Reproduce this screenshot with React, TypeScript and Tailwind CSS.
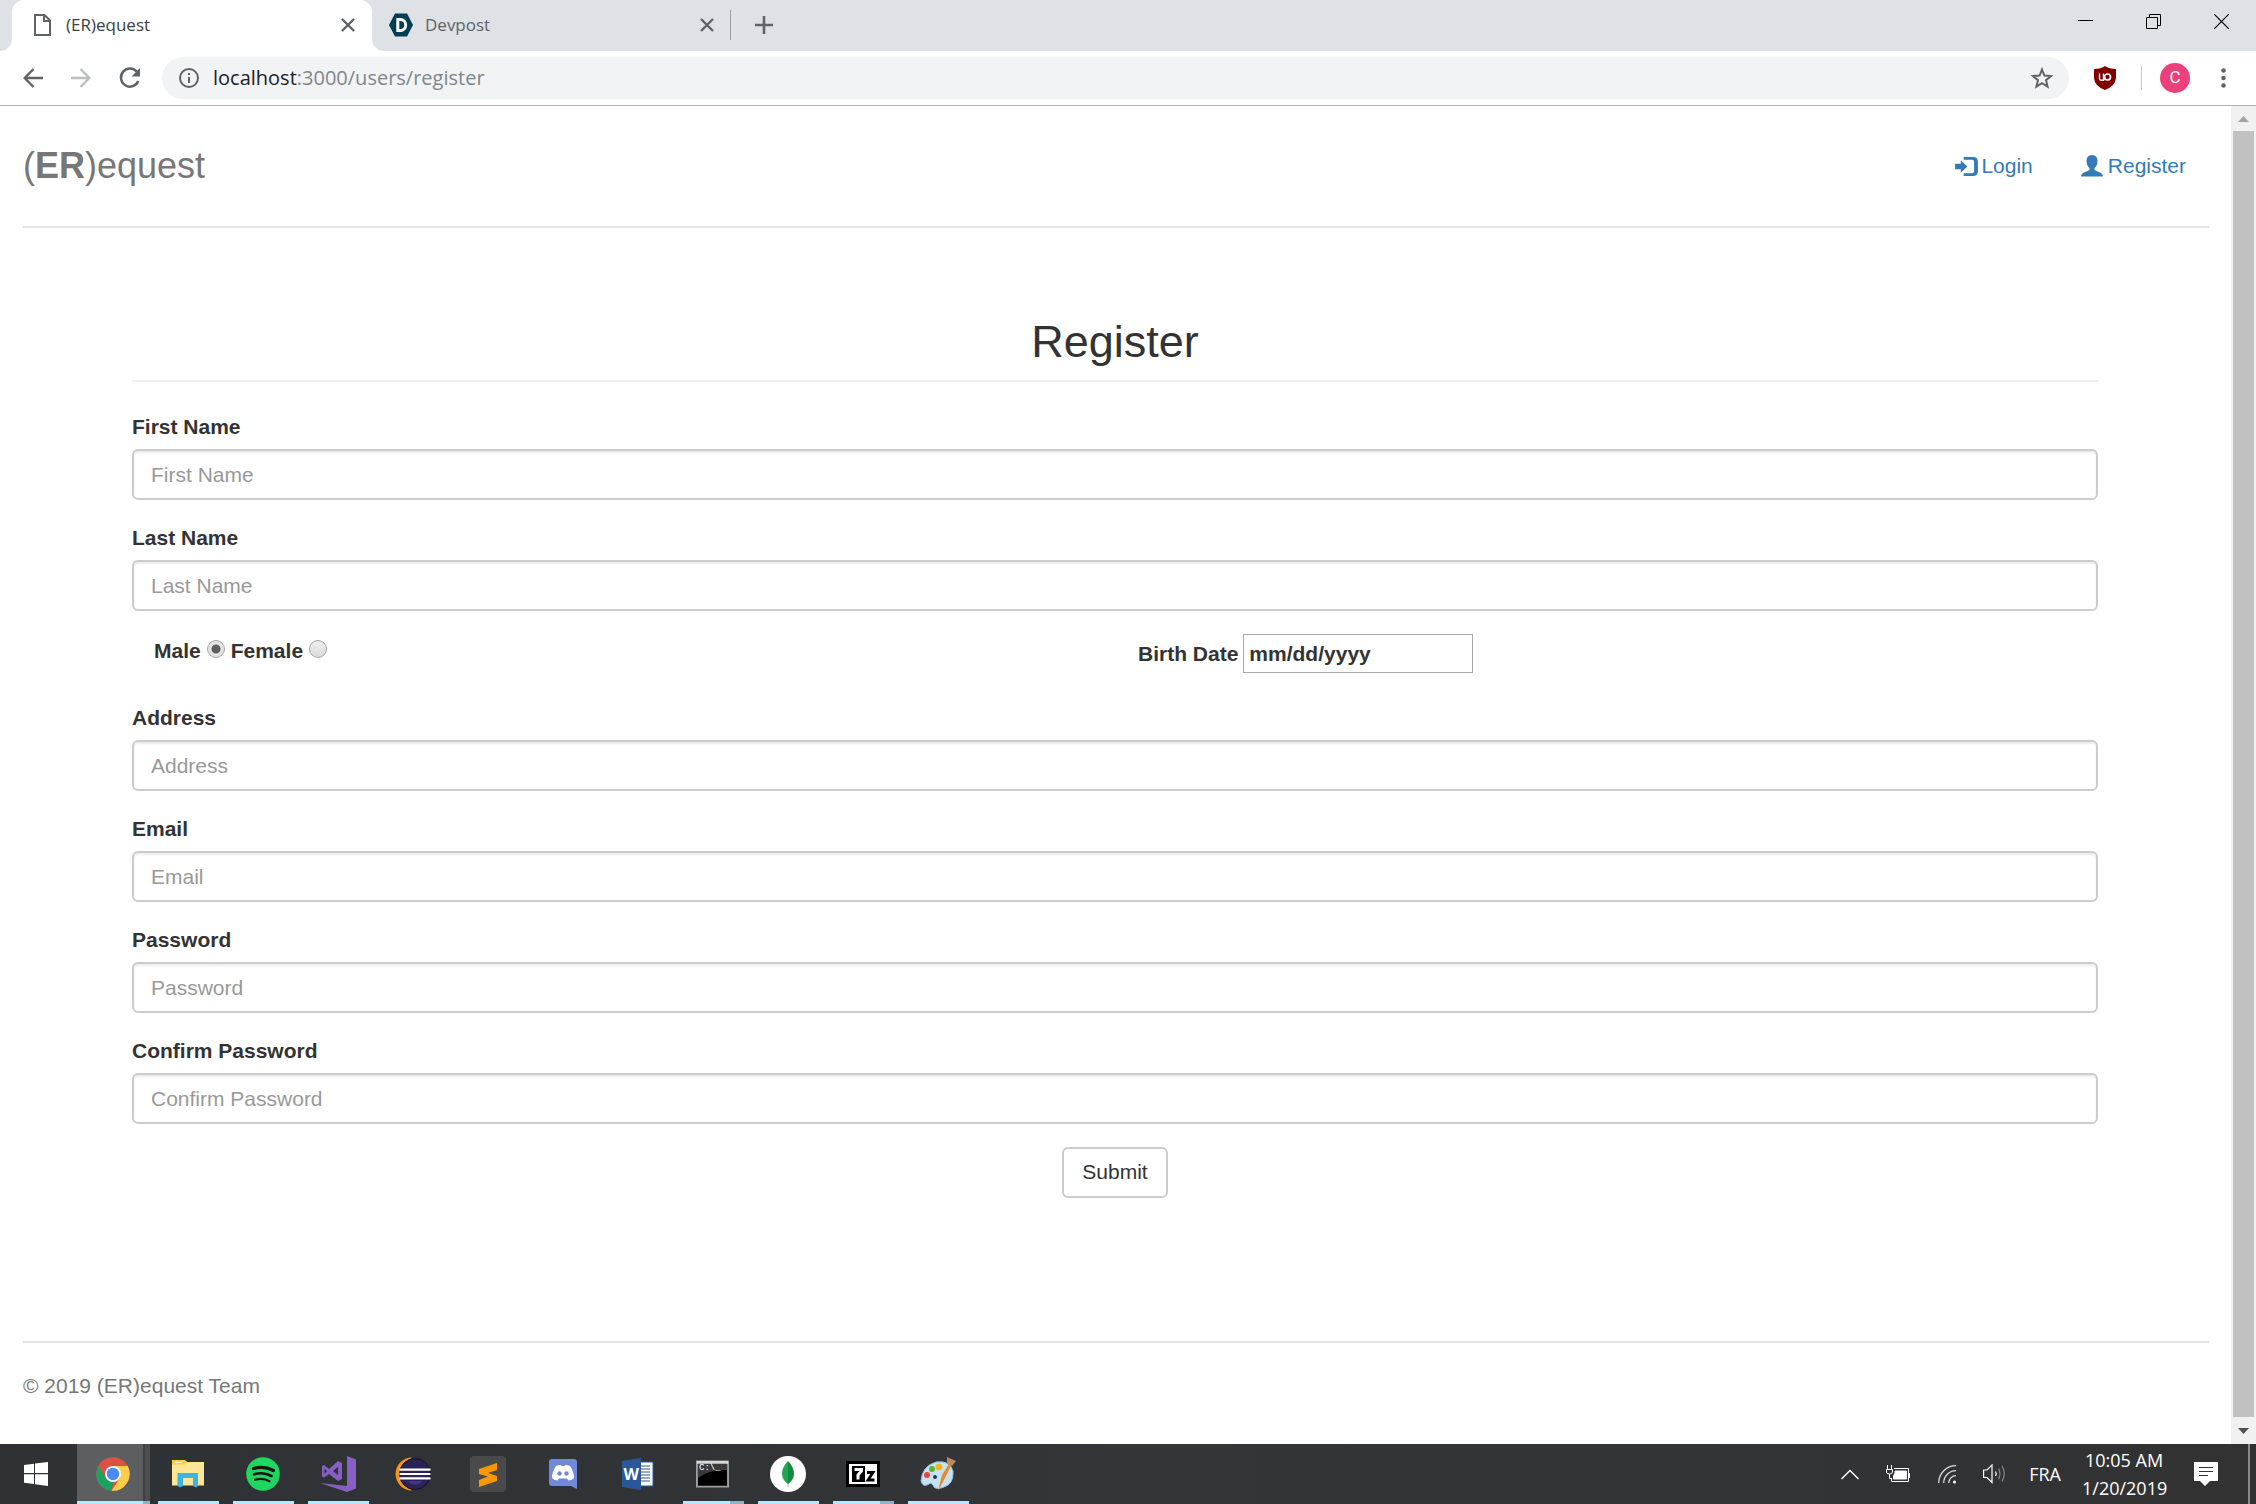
import React from "react";

const CloseTab = () => (
  <svg width="14" height="14" viewBox="0 0 14 14" stroke="#5f6368" strokeWidth="2.4" fill="none">
    <path d="M1 1 L13 13 M13 1 L1 13" />
  </svg>
);

function TabStrip() {
  return (
    <header className="flex h-[51px] items-stretch bg-[#dee1e6]">
      <div className="flex w-3 items-end">
        <svg width="12" height="12" viewBox="0 0 12 12"><path d="M12 0 V12 H0 A12 12 0 0 0 12 0Z" fill="#fff" /></svg>
      </div>
      <div className="flex w-[360px] items-center rounded-t-xl bg-white pb-0.5 pl-[22px] pr-[17px]">
        <svg width="17" height="22" viewBox="0 0 17 22" fill="none" stroke="#5f6368" strokeWidth="2">
          <path d="M1 1 H10.500 L16 6.500 V21 H1Z" /><path d="M10 1 V7 H16" />
        </svg>
        <span className="ml-[15px] flex-1 text-[17px] text-[#3c4043]">(ER)equest</span>
        <button aria-label="Close (ER)equest"><CloseTab /></button>
      </div>
      <div className="flex w-3 items-end">
        <svg width="12" height="12" viewBox="0 0 12 12"><path d="M0 0 V12 H12 A12 12 0 0 1 0 0Z" fill="#fff" /></svg>
      </div>
      <div className="flex w-[346px] items-center pb-0.5 pl-[5px] pr-4">
        <svg width="24" height="24" viewBox="0 0 24 24">
          <path d="M6 0.500 H18 L24 12 L18 23.500 H6 L0 12Z" fill="#003e54" />
          <path d="M8.800 6.500 H11.500 A5.200 5.500 0 0 1 11.500 17.500 H8.800Z" fill="none" stroke="#fff" strokeWidth="3" />
        </svg>
        <span className="ml-3 flex-1 text-[17px] text-[#5f6368]">Devpost</span>
        <button aria-label="Close Devpost"><CloseTab /></button>
      </div>
      <div className="flex items-center gap-6 pb-0.5">
        <span className="h-[30px] w-px bg-[#9a9da1]" />
        <button aria-label="New tab">
          <svg width="18" height="18" viewBox="0 0 18 18" stroke="#5f6368" strokeWidth="2.6"><path d="M9 0 V18 M0 9 H18" /></svg>
        </button>
      </div>
      <div className="ml-auto flex items-start gap-[53px] pr-[27px] pt-[14px]">
        <button aria-label="Minimize"><svg width="15" height="15" viewBox="0 0 15 15"><path d="M0 6.500 H15" stroke="#000" /></svg></button>
        <button aria-label="Restore"><svg width="15" height="15" viewBox="0 0 15 15" fill="none" stroke="#000"><path d="M.5 3.500 H11.500 V14.500 H.5Z M3.500 3.500 V.5 H14.500 V11.500 H11.500" /></svg></button>
        <button aria-label="Close"><svg width="15" height="15" viewBox="0 0 15 15" stroke="#000" strokeWidth="1.200"><path d="M0 0 L15 15 M15 0 L0 15" /></svg></button>
      </div>
    </header>
  );
}

function Toolbar() {
  return (
    <div className="flex h-[55px] items-center border-b border-[#b0b2b5] bg-white pl-[23px] pr-[30px]">
      <div className="flex w-[139px] items-center gap-7">
        <button aria-label="Back"><svg width="20" height="20" viewBox="0 0 20 20" fill="none" stroke="#5f6368" strokeWidth="2.400"><path d="M20 10 H2 M10.500 1 L1.700 10 L10.500 19" /></svg></button>
        <button aria-label="Forward"><svg width="20" height="20" viewBox="0 0 20 20" fill="none" stroke="#bbbdc0" strokeWidth="2.400"><path d="M0 10 H18 M9.500 1 L18.300 10 L9.500 19" /></svg></button>
        <button aria-label="Reload"><svg width="22" height="22" viewBox="0 0 22 22" fill="none" stroke="#5f6368" strokeWidth="2.500"><path d="M18 5 A9 9 0 1 0 19.300 14" /><path d="M21 1 V9.500 H12.500Z" fill="#5f6368" stroke="none" /></svg></button>
      </div>
      <div className="flex h-[42px] flex-1 items-center rounded-full bg-[#f1f3f4] pl-[17px] pr-[16px]">
        <svg width="20" height="20" viewBox="0 0 20 20" fill="none" stroke="#5f6368" strokeWidth="2"><circle cx="10" cy="10" r="9" /><path d="M10 9 V15 M10 5 V7" /></svg>
        <a href="#address" className="ml-[14px] flex-1 text-[20px] text-[#80868b]"><span className="text-[#202124]">localhost</span>:3000/users/register</a>
        <button aria-label="Bookmark"><svg width="22" height="22" viewBox="0 0 22 22" fill="none" stroke="#5f6368" strokeWidth="2"><path d="M11 2.500 L13.400 8.500 L20 9 L15 13.200 L16.600 19.600 L11 16.100 L5.400 19.600 L7 13.200 L2 9 L8.600 8.500Z" /></svg></button>
      </div>
      <div className="flex items-center pl-[25px]">
        <button aria-label="uBlock Origin">
          <svg width="22" height="24" viewBox="0 0 22 24"><path d="M11 0 Q15 3 22 3 V12 Q21.500 20 11 24 Q.5 20 0 12 V3 Q7 3 11 0Z" fill="#800000" /><path d="M5.500 7.500 V12.500 Q5.500 14.200 7.200 14.200 H9.500 V7.500" fill="none" stroke="#fff" strokeWidth="1.400" /><circle cx="13.500" cy="11" r="3" fill="none" stroke="#fff" strokeWidth="1.700" /></svg>
        </button>
        <span className="ml-[25px] h-6 w-px bg-[#c6c8ca]" />
        <button className="ml-[18px] flex size-[30px] items-center justify-center rounded-full bg-[#ec407a] font-[Roboto] text-[17px] text-white">C</button>
        <button aria-label="Menu" className="ml-[31px]"><svg width="5" height="22" viewBox="0 0 5 22" fill="#5f6368"><circle cx="2.500" cy="3.500" r="2.300" /><circle cx="2.500" cy="11" r="2.300" /><circle cx="2.500" cy="18.500" r="2.300" /></svg></button>
      </div>
    </div>
  );
}

function Field({ id, label, type = "text" }: { id: string; label: string; type?: string }) {
  return (
    <div className="mb-[23px]">
      <label htmlFor={id} className="mb-[7px] block font-bold">{label}</label>
      <input id={id} type={type} placeholder={label} className="block h-[51px] w-full rounded-md border-2 border-[#ccc] bg-white px-[17px] shadow-[inset_0_2px_2px_rgba(0,0,0,0.075)] placeholder:text-[#999]" />
    </div>
  );
}

const radioClass =
  "mx-1.5 mb-0.5 size-[18px] appearance-none rounded-full border border-[#a6a6a6] bg-linear-to-b from-[#eee] to-[#dcdcdc] checked:bg-[radial-gradient(circle,#5e5e5e_0_4px,#e3e3e3_5px)]";

function Page() {
  return (
    <main className="min-w-0 flex-1 bg-white pl-[23px] pr-[22px] font-['Liberation_Sans',Arial,sans-serif] text-[21px] leading-[30px] text-[#333]">
      <nav className="flex h-[122px] items-center justify-between border-b-2 border-[#e5e5e5] pr-[23px]">
        <h3 className="text-[36px] leading-10 text-[#777]">(<b>ER</b>)equest</h3>
        <div className="flex gap-[48px] text-[#337ab7]">
          <a href="#login" className="flex items-center gap-[3px]">
            <svg width="23" height="19" viewBox="0 0 24 20" fill="#337ab7"><path d="M0 7 H6 V3.500 L13 10 L6 16.500 V13 H0Z" /><path d="M9 0 H19 Q24 0 24 5 V15 Q24 20 19 20 H9 V17 H18 Q20 17 20 15 V5 Q20 3 18 3 H9Z" /></svg>
            Login
          </a>
          <a href="#register" className="flex items-center gap-[5px]">
            <svg width="22" height="22" viewBox="0 0 22 22" fill="#337ab7"><path d="M5.500 6 Q5.500 0 11 0 Q16.500 0 16.500 6 Q16.500 10.500 13.500 13 V15 L20 18 Q22 19 22 21.500 H0 Q0 19 2 18 L8.500 15 V13 Q5.500 10.500 5.500 6Z" /></svg>
            Register
          </a>
        </div>
      </nav>
      <form className="ml-[109px] mr-[111px] pt-[87px]" onSubmit={(e) => e.preventDefault()}>
        <h2 className="mb-[30px] border-b-2 border-[#eee] pb-3 text-center text-[45px] leading-[53px]">Register</h2>
        <Field id="first" label="First Name" />
        <Field id="last" label="Last Name" />
        <div className="grid h-[69px] grid-cols-2 font-bold">
          <div className="flex items-baseline pl-[22px] leading-[34px]">
            <label htmlFor="male">Male</label>
            <input id="male" type="radio" name="gender" defaultChecked className={radioClass} />
            <label htmlFor="female">Female</label>
            <input id="female" type="radio" name="gender" className={radioClass} />
          </div>
          <div className="flex h-[39px] items-center pl-[23px]">
            <label htmlFor="birth">Birth Date</label>
            <input id="birth" type="text" placeholder="mm/dd/yyyy" className="ml-[5px] h-[39px] w-[230px] border border-[#a9a9a9] px-[5px] font-bold placeholder:text-[#333]" />
          </div>
        </div>
        <Field id="address" label="Address" />
        <Field id="email" label="Email" type="email" />
        <Field id="password" label="Password" type="password" />
        <Field id="confirm" label="Confirm Password" type="password" />
        <div className="flex justify-center">
          <button type="submit" className="h-[51px] rounded-md border-2 border-[#ccc] bg-white px-[18px] pb-0.5">Submit</button>
        </div>
      </form>
      <footer className="mt-[143px] border-t-2 border-[#e5e5e5] pt-[28px] text-[#777]">© 2019 (ER)equest Team</footer>
    </main>
  );
}

function ScrollBar() {
  return (
    <div className="flex w-[25px] flex-col items-center bg-[#f1f1f1]">
      <svg width="25" height="25" viewBox="0 0 25 25"><path d="M7 16 L12.500 10 L18 16Z" fill="#a3a3a3" /></svg>
      <div className="w-[21px] flex-1 bg-[#c1c1c1]" />
      <svg width="25" height="27" viewBox="0 0 25 27"><path d="M7 11 L12.500 17 L18 11Z" fill="#505050" /></svg>
    </div>
  );
}

const Chrome = () => (
  <svg width="34" height="34" viewBox="0 0 34 34">
    <circle cx="17" cy="17" r="16.800" fill="#dd5144" />
    <path d="M2.400 8.600 L10 21.500 L17 25 L15.500 33.800 A17 17 0 0 1 2.400 8.600Z" fill="#1aa260" />
    <path d="M17 9 H31.700 A17 17 0 0 1 15.500 33.800 L24 21Z" fill="#ffcd46" />
    <circle cx="17" cy="17" r="8" fill="#fff" /><circle cx="17" cy="17" r="6.200" fill="#4a8af4" />
  </svg>
);
const Explorer = () => (
  <svg width="32" height="28" viewBox="0 0 32 28">
    <path d="M0 1 H13 L15 2 H32 V25.500 H0Z" fill="#ffe694" /><path d="M0 0 H13 L15 2 L13 4.500 H0Z" fill="#ffcf38" /><path d="M3 2.500 H10" stroke="#fff" />
    <path d="M5.500 13 H26 V26 L24 27.500 L21 26 V18 H11 V26 L8 27.500 L5.500 26Z" fill="#3cb4e7" />
  </svg>
);
const Spotify = () => (
  <svg width="34" height="34" viewBox="0 0 34 34" fill="none" stroke="#191414" strokeLinecap="round">
    <circle cx="17" cy="17" r="16.800" fill="#1ed760" stroke="none" />
    <path d="M7.500 11.500 Q18 8.500 27.500 13.500" strokeWidth="3.200" /><path d="M8 17.300 Q17.500 14.500 25.500 19" strokeWidth="2.600" /><path d="M9 22.800 Q17 20.500 23.500 24.300" strokeWidth="2.200" />
  </svg>
);
const VisualStudio = () => (
  <svg width="36" height="36" viewBox="0 0 36 36" fill="#865fc5">
    <path d="M27 0 L36 3.500 V32.500 L27 36 L0 27 L27 30Z" />
    <path fillRule="evenodd" d="M18 5 L22 7 V23 L18 25 L9 18 L4 21.500 L2 20.500 V10 L4 9 L9 13 Z M18 11 L13 15 L18 19Z M4.500 12.500 V18 L7 15.300Z" />
  </svg>
);
const Eclipse = () => (
  <svg width="36" height="34" viewBox="0 0 36 34">
    <path d="M17 .5 A16.500 16.500 0 0 0 17 33.500 A20 20 0 0 1 17 .5Z" fill="#f7941e" />
    <circle cx="20" cy="17" r="15.500" fill="#2c2255" stroke="#14102b" />
    <path d="M12 24 H28 Q20 31 12 24Z" fill="#423592" />
    <path d="M4.500 12.700 H35.500 M4.500 17 H35.500 M4.500 21.300 H35.500" stroke="#fff" strokeWidth="2.200" />
  </svg>
);
const Sublime = () => (
  <span className="flex size-9 items-center justify-center rounded-sm bg-[#4a4a4a]">
    <svg width="20" height="25" viewBox="0 0 20 25" fill="#ff9800"><path d="M1 7 L19 1 V8 L10 11 L19 14 V19 L1 25 V18 L10 14.500 L1 12Z" /></svg>
  </span>
);
const Discord = () => (
  <svg width="28" height="30" viewBox="0 0 28 30">
    <path d="M3 0 H25 Q28 0 28 3 V30 L22 27 H3 Q0 27 0 24 V3 Q0 0 3 0Z" fill="#7289da" />
    <path d="M7 7 Q10 5.500 11.500 6 L12.500 7 H15.500 L16.500 6 Q18 5.500 21 7 Q25 13 25 19 Q22.500 21.500 19.500 21.500 L18 19.500 H10 L8.500 21.500 Q5.500 21.500 3 19 Q3 13 7 7Z" fill="#fff" />
    <circle cx="10.500" cy="14.500" r="2.200" fill="#7289da" /><circle cx="17.500" cy="14.500" r="2.200" fill="#7289da" />
  </svg>
);
const Word = () => (
  <span className="relative flex h-8 w-8 items-center">
    <svg width="32" height="32" viewBox="0 0 32 32"><path d="M18 4 H31 V28 H18Z" fill="#fff" stroke="#2b579a" /><path d="M19 8 H28 M19 11 H28 M19 14 H28 M19 17 H28 M19 20 H28 M19 23 H28" stroke="#2b579a" /><path d="M0 3 L19 0 V32 L0 29Z" fill="#2b579a" /></svg>
    <span className="absolute left-[2px] font-['Open_Sans',sans-serif] text-[16px] font-bold text-white">W</span>
  </span>
);
const Cmd = () => (
  <span className="relative flex">
    <svg width="33" height="28" viewBox="0 0 34 28"><path d="M1 1 H33 V27 H1Z" fill="#000" stroke="#9a9fa3" strokeWidth="2" /><path d="M2 3 H32 V10 Q14 9 2 18Z" fill="#3a3a3a" /><path d="M1 2 H33" stroke="#d5d9dc" strokeWidth="3" /></svg>
    <span className="absolute left-[3px] top-[3px] font-['Liberation_Mono',monospace] text-[9px] leading-[10px] text-white">C:\_</span>
  </span>
);
const Mongo = () => (
  <svg width="36" height="36" viewBox="0 0 36 36"><circle cx="18" cy="18" r="18" fill="#fff" /><path d="M18 26 V31" stroke="#aaa" /><path d="M18 5 Q12 11 12 17.500 Q12 24 18 28Z" fill="#21a654" /><path d="M18 5 Q24 11 24 17.500 Q24 24 18 28Z" fill="#138a44" /></svg>
);
const SevenZip = () => (
  <svg width="34" height="26" viewBox="0 0 34 26"><path d="M1.500 1.500 H32.500 V24.500 H1.500Z" fill="#fff" stroke="#000" strokeWidth="3" /><path d="M6 5 H19 V21 H6Z" fill="#000" /><path d="M8.500 8.500 H15.500 V10 L12 14 V18.500" fill="none" stroke="#fff" strokeWidth="3" /><path d="M21 11.500 H27 L22 19 H28.500" fill="none" stroke="#000" strokeWidth="2.800" /></svg>
);
const Paint = () => (
  <svg width="36" height="34" viewBox="0 0 36 34">
    <path d="M1 24 Q2 9 16 5 Q30 3 33 14 Q34 27 24 30 Q17 33 14 30 Q12 25 9 27 Q3 31 1 24Z" fill="#c5e2f2" stroke="#8fbbd6" />
    <circle cx="7" cy="18" r="3" fill="#e5483b" /><circle cx="12" cy="12" r="3" fill="#5cb531" /><circle cx="19" cy="10" r="3.300" fill="#f9b519" /><circle cx="15" cy="20" r="2" fill="#223d54" />
    <path d="M18 34 L22 18 L29 7 L31 9 L25 21Z" fill="#e58a2a" /><path d="M27 0 L36 4 L32 9 L27 7Z" fill="#b98a5c" />
  </svg>
);

const apps: { name: string; Icon: () => React.ReactElement; open?: boolean; stacked?: boolean }[] = [
  { name: "File Explorer", Icon: Explorer, open: true },
  { name: "Spotify", Icon: Spotify, open: true },
  { name: "Visual Studio", Icon: VisualStudio, open: true },
  { name: "Eclipse", Icon: Eclipse },
  { name: "Sublime Text", Icon: Sublime },
  { name: "Discord", Icon: Discord },
  { name: "Word", Icon: Word },
  { name: "Command Prompt", Icon: Cmd, open: true, stacked: true },
  { name: "MongoDB Compass", Icon: Mongo, open: true },
  { name: "7-Zip", Icon: SevenZip, open: true, stacked: true },
  { name: "Paint", Icon: Paint, open: true },
];

function Taskbar() {
  return (
    <footer className="flex h-[60px] items-stretch bg-linear-to-r from-[#2e3234] via-[#333537] to-[#323233] text-white">
      <button aria-label="Start" className="flex w-[77px] items-center pl-6">
        <svg width="24" height="24" viewBox="0 0 24 24" fill="#fff"><path d="M0 3 L10 1.700 V11 H0Z M11 1.500 L24 0 V11 H11Z M0 12.200 H10 V22 L0 20.700Z M11 12.200 H24 V24 L11 22.200Z" /></svg>
      </button>
      <button aria-label="Chrome" className="relative flex w-[73px] items-center bg-[#5c5e60] pl-[19px]">
        <Chrome />
        <span className="absolute inset-y-0 right-0 w-[7px] border-l-2 border-[#3e4042] bg-[#4b4d4e]" />
        <span className="absolute bottom-0 left-0 h-[3px] w-[66px] bg-[#b5e8ff]" />
        <span className="absolute bottom-0 right-0 h-[3px] w-[7px] bg-[#8fb2c4]" />
      </button>
      {apps.map(({ name, Icon, open, stacked }) => (
        <button key={name} aria-label={name} className="relative flex w-[75px] items-center justify-center">
          <Icon />
          {open && <span className="absolute bottom-0 left-2 h-[3px] w-[61px] bg-[#b5e8ff]" />}
          {stacked && <span className="absolute bottom-0 left-[55px] h-[3px] w-[14px] bg-[#8fb2c4]" />}
        </button>
      ))}
      <div className="ml-auto flex items-center">
        <button aria-label="Show hidden icons"><svg width="18" height="11" viewBox="0 0 18 11" fill="none" stroke="#fff" strokeWidth="1.400"><path d="M.5 10 L9 1.500 L17.500 10" /></svg></button>
        <svg className="ml-[27px]" width="24" height="18" viewBox="0 0 24 18" fill="none" stroke="#fff"><path d="M8 3.500 H22.500 V16.500 H5.500 V13" /><path d="M9 6 H20.500 V14 H7.500 V11 L9 8Z" fill="#fff" /><path d="M23.500 8 V13" /><path d="M1.500 0 V4 M5.500 0 V4 M.5 4.500 H6.500 V7 Q6.500 9 3.500 9 Q.5 9 .5 7Z M3.500 9 V13.500 H6" /></svg>
        <svg className="ml-7" width="19" height="19" viewBox="0 0 19 19" fill="none" stroke="#ddd" strokeWidth="1.300"><path d="M.7 18 A17.300 17.300 0 0 1 18 .7 M5.700 18 A12.300 12.300 0 0 1 18 5.700 M10.700 18 A7.300 7.300 0 0 1 18 10.700" /><circle cx="16.500" cy="17" r="1.500" fill="#fff" stroke="none" /></svg>
        <svg className="ml-[26px]" width="23" height="20" viewBox="0 0 23 20" fill="none" stroke="#fff" strokeWidth="1.200"><path d="M.6 6 H4 L9 1 V18.500 L4 13.500 H.6Z" /><path d="M12.500 7.500 Q14 9.700 12.500 12" /><path d="M15.500 4.500 Q18.500 9.700 15.500 15 M19 2 Q23.500 9.700 19 17.500" stroke="#888" /></svg>
        <span className="ml-[23px] text-[18px]">FRA</span>
        <div className="ml-[21px] w-[84px] text-center text-[18px] leading-7"><div>10:05 AM</div><div>1/20/2019</div></div>
        <button aria-label="Notifications" className="ml-7"><svg width="24" height="24" viewBox="0 0 24 24"><path d="M0 0 H24 V19 H16 L11 24 L6 19 H0Z" fill="#fff" /><path d="M5 5.500 H19 M5 9.500 H19 M5 13.500 H14" stroke="#333" /></svg></button>
        <span className="ml-[30px] mr-[6px] h-[60px] w-[2px] bg-[#8a8a8a]" />
      </div>
    </footer>
  );
}

export default function App() {
  return (
    <div className="flex min-h-screen flex-col bg-white font-['Open_Sans',sans-serif]">
      <TabStrip />
      <Toolbar />
      <div className="flex flex-1 items-stretch">
        <Page />
        <ScrollBar />
      </div>
      <Taskbar />
    </div>
  );
}
